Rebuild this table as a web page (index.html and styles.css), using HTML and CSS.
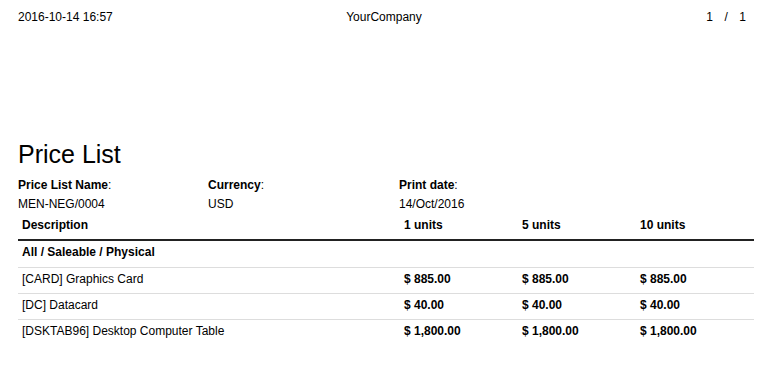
FILE: index.html
```html
<!DOCTYPE html>
<html>
<head>
<meta charset="utf-8">
<link rel="stylesheet" href="styles.css">
</head>
<body>
<header class="page-header">
  <div class="hdr-left">2016-10-14 16:57</div>
  <div class="hdr-center">YourCompany</div>
  <div class="hdr-right"><span>1</span><span>/</span><span>1</span></div>
</header>
<main class="report">
  <h2 class="title">Price List</h2>
  <div class="info">
    <div class="info-col"><div><strong>Price List Name</strong>:</div><div>MEN-NEG/0004</div></div>
    <div class="info-col"><div><strong>Currency</strong>:</div><div>USD</div></div>
    <div class="info-col"><div><strong>Print date</strong>:</div><div>14/Oct/2016</div></div>
  </div>
  <table class="prices">
    <colgroup>
      <col class="c-desc"><col class="c-qty"><col class="c-qty"><col class="c-qty">
    </colgroup>
    <thead>
      <tr><th>Description</th><th>1 units</th><th>5 units</th><th>10 units</th></tr>
    </thead>
    <tbody>
      <tr class="categ"><td colspan="4"><strong>All / Saleable / Physical</strong></td></tr>
      <tr><td>[CARD] Graphics Card</td><td class="amt">$ 885.00</td><td class="amt">$ 885.00</td><td class="amt">$ 885.00</td></tr>
      <tr><td>[DC] Datacard</td><td class="amt">$ 40.00</td><td class="amt">$ 40.00</td><td class="amt">$ 40.00</td></tr>
      <tr class="last"><td>[DSKTAB96] Desktop Computer Table</td><td class="amt">$ 1,800.00</td><td class="amt">$ 1,800.00</td><td class="amt">$ 1,800.00</td></tr>
    </tbody>
  </table>
</main>
</body>
</html>
```
FILE: styles.css
```css
html, body {
  margin: 0;
  padding: 0;
  background: #fff;
}
body {
  width: 768px;
  font-family: "Liberation Sans", Arial, Helvetica, sans-serif;
  font-size: 12px;
  line-height: 1.42857;
  color: #000;
}
.page-header {
  display: grid;
  grid-template-columns: 1fr auto 1fr;
  padding: 9px 18px 0 18px;
}
.hdr-center {
  text-align: center;
}
.hdr-right {
  display: flex;
  justify-content: flex-end;
  gap: 11.5px;
  padding-right: 4px;
}
.report {
  padding: 0 14px 0 18px;
}
.title {
  margin: 115.3px 0 0 0;
  font-size: 25px;
  font-weight: normal;
  line-height: 1.1;
}
.info {
  display: grid;
  grid-template-columns: 190px 191px 190px;
  line-height: 19px;
  margin-top: 7px;
}
.info strong {
  font-weight: bold;
}
.prices {
  width: 736px;
  border-collapse: collapse;
  table-layout: fixed;
}
.c-desc { width: 382px; }
.c-qty { width: 118px; }
.prices th,
.prices td {
  text-align: left;
  padding: 3px 4px 6.3px 4px;
  line-height: 16px;
}
.prices th {
  font-weight: bold;
  border-bottom: 2px solid #222;
}
.prices td {
  border-bottom: 1px solid #ddd;
}
.prices tr.last td {
  border-bottom: none;
}
.amt {
  font-weight: bold;
}
```
